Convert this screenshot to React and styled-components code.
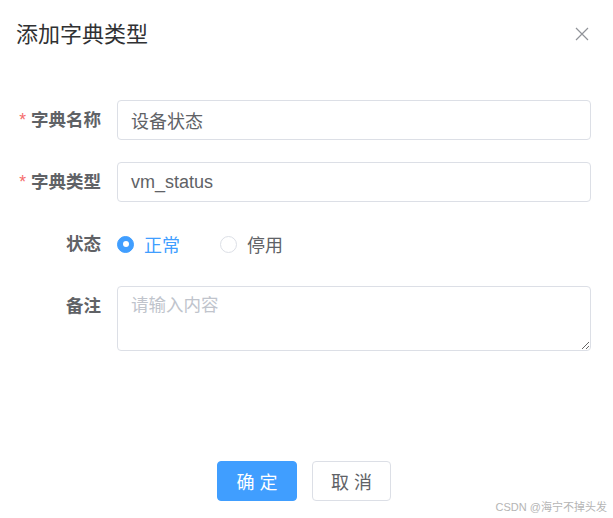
import styled, { createGlobalStyle } from "styled-components";

const GlobalStyle = createGlobalStyle`
  body {
    margin: 0;
    background: #ffffff;
    font-family: "Liberation Sans", "Noto Sans CJK SC", sans-serif;
  }
`;

const Dialog = styled.div`
  width: 613px;
  height: 518px;
  position: relative;
  background: #fff;
  box-sizing: border-box;
  display: flex;
  flex-direction: column;
`;

const Header = styled.div`
  height: 100px;
  padding: 0 22px 0 16px;
  display: flex;
  align-items: flex-start;
  justify-content: space-between;
`;

const Title = styled.div`
  margin-top: 20px;
  font-size: 22px;
  line-height: 30px;
  color: #303133;
`;

const Close = styled.button`
  margin-top: 27px;
  margin-right: 2px;
  width: 14px;
  height: 14px;
  padding: 0;
  border: none;
  background: none;
  display: flex;
  svg {
    width: 14px;
    height: 14px;
  }
`;

const Form = styled.div`
  display: flex;
  flex-direction: column;
  gap: 22px;
  padding-right: 22px;
`;

const Row = styled.div`
  display: flex;
  align-items: ${(p) => (p.$top ? "flex-start" : "center")};
  min-height: 40px;
`;

const Label = styled.div`
  width: 101px;
  padding-right: 16px;
  flex-shrink: 0;
  text-align: right;
  font-size: 17.5px;
  font-weight: bold;
  color: #606266;
  line-height: 40px;
`;

const Star = styled.span`
  color: #f56c6c;
  font-weight: normal;
  margin-right: 5px;
`;

const Input = styled.div`
  flex: 1;
  height: 40px;
  box-sizing: border-box;
  border: 1px solid #dcdfe6;
  border-radius: 4px;
  padding: 0 13px;
  display: flex;
  align-items: center;
  font-size: 18px;
  color: #606266;
`;

const TextArea = styled.textarea`
  flex: 1;
  height: 65px;
  box-sizing: border-box;
  border: 1px solid #dcdfe6;
  border-radius: 4px;
  padding: 6px 13px;
  font-family: "Liberation Sans", "Noto Sans CJK SC", sans-serif;
  font-size: 17.5px;
  line-height: 24px;
  color: #606266;
  resize: vertical;
  outline: none;
  &::placeholder {
    color: #c0c4cc;
  }
`;

const RadioGroup = styled.div`
  display: flex;
  align-items: center;
  gap: 40px;
  height: 40px;
`;

const Radio = styled.label`
  display: flex;
  align-items: center;
  gap: 10px;
  font-size: 18px;
  color: ${(p) => (p.$checked ? "#409eff" : "#606266")};
`;

const Dot = styled.span`
  width: 17px;
  height: 17px;
  box-sizing: border-box;
  border-radius: 50%;
  border: 1px solid ${(p) => (p.$checked ? "#409eff" : "#dcdfe6")};
  background: ${(p) => (p.$checked ? "#409eff" : "#fff")};
  display: flex;
  align-items: center;
  justify-content: center;
  &::after {
    content: "";
    width: 6px;
    height: 6px;
    border-radius: 50%;
    background: #fff;
    display: ${(p) => (p.$checked ? "block" : "none")};
  }
`;

const Footer = styled.div`
  margin-top: auto;
  padding-bottom: 17px;
  display: flex;
  justify-content: center;
  gap: 15px;
  padding-right: 5px;
`;

const Button = styled.button`
  width: ${(p) => (p.$primary ? "80px" : "79px")};
  height: 40px;
  box-sizing: border-box;
  border-radius: 4px;
  border: 1px solid ${(p) => (p.$primary ? "#409eff" : "#dcdfe6")};
  background: ${(p) => (p.$primary ? "#409eff" : "#fff")};
  color: ${(p) => (p.$primary ? "#fff" : "#606266")};
  font-family: "Liberation Sans", "Noto Sans CJK SC", sans-serif;
  font-size: 18px;
  letter-spacing: 5px;
  padding: 0 0 0 5px;
`;

const Watermark = styled.div`
  position: absolute;
  right: 6px;
  bottom: 4px;
  font-size: 11px;
  color: #b5b5b5;
`;

export default function App() {
  return (
    <>
      <GlobalStyle />
      <Dialog>
        <Header>
          <Title>添加字典类型</Title>
          <Close>
            <svg viewBox="0 0 14 14" fill="none" stroke="#909399" strokeWidth="1.2">
              <path d="M1 1L13 13M13 1L1 13" />
            </svg>
          </Close>
        </Header>
        <Form>
          <Row>
            <Label>
              <Star>*</Star>字典名称
            </Label>
            <Input>设备状态</Input>
          </Row>
          <Row>
            <Label>
              <Star>*</Star>字典类型
            </Label>
            <Input>vm_status</Input>
          </Row>
          <Row>
            <Label>状态</Label>
            <RadioGroup>
              <Radio $checked>
                <Dot $checked />
                正常
              </Radio>
              <Radio>
                <Dot />
                停用
              </Radio>
            </RadioGroup>
          </Row>
          <Row $top>
            <Label>备注</Label>
            <TextArea placeholder="请输入内容" />
          </Row>
        </Form>
        <Footer>
          <Button $primary>确定</Button>
          <Button>取消</Button>
        </Footer>
        <Watermark>CSDN @海宁不掉头发</Watermark>
      </Dialog>
    </>
  );
}
